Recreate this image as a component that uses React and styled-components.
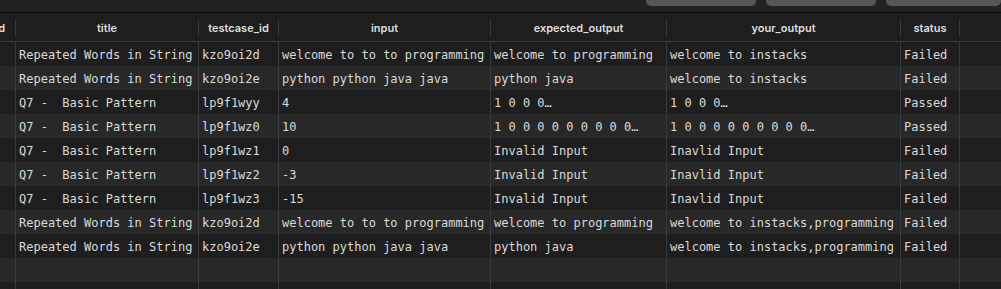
import React from "react";
import styled, { createGlobalStyle } from "styled-components";

const GlobalStyle = createGlobalStyle`
  html, body {
    margin: 0;
    padding: 0;
    background: #1e1e1e;
    overflow: hidden;
  }
  #root {
    width: 1001px;
    height: 289px;
    overflow: hidden;
  }
`;

const Page = styled.div`
  display: flex;
  flex-direction: column;
  width: 1001px;
  height: 289px;
  overflow: hidden;
  background: #1e1e1e;
`;

const Toolbar = styled.div`
  height: 12px;
  flex: none;
  background: #222222;
  border-bottom: 1px solid #0a0a0a;
  display: flex;
  justify-content: flex-end;
  align-items: flex-end;
  gap: 10px;
  overflow: hidden;
`;

const ToolButton = styled.div`
  width: ${(p) => p.$w}px;
  height: 22px;
  flex: none;
  margin-bottom: 6px;
  border-radius: 5px;
  background: #565656;
  color: #e6e6e6;
  font-family: Inter, "Liberation Sans", sans-serif;
  font-size: 12px;
  line-height: 12px;
  display: flex;
  align-items: flex-start;
  justify-content: ${(p) => p.$align || "center"};
  padding: 3px 14px 0;
  box-sizing: border-box;
`;

const Table = styled.div`
  display: flex;
  flex-direction: column;
  flex: 1;
`;

const HeaderRow = styled.div`
  display: flex;
  height: 29px;
  flex: none;
  box-sizing: border-box;
  padding: 7px 0 5px;
  border-bottom: 1px solid #3a3a3a;
  background: #1e1e1e;
`;

const HeaderCell = styled.div`
  width: ${(p) => (p.$w ? `${p.$w}px` : "auto")};
  flex: ${(p) => (p.$w ? "none" : "1")};
  box-sizing: border-box;
  border-right: ${(p) => (p.$w ? "1px solid #3a3a3a" : "none")};
  display: flex;
  align-items: center;
  justify-content: ${(p) => (p.$end ? "flex-end" : "center")};
  padding-right: ${(p) => (p.$end ? "10px" : "0")};
  overflow: hidden;
  white-space: nowrap;
  font-family: Inter, "Liberation Sans", sans-serif;
  font-size: 11px;
  font-weight: 600;
  color: #dedede;
`;

const Row = styled.div`
  display: flex;
  height: 24px;
  flex: none;
  background: ${(p) => (p.$alt ? "#282828" : "#1e1e1e")};
`;

const Cell = styled.div`
  width: ${(p) => (p.$w ? `${p.$w}px` : "auto")};
  flex: ${(p) => (p.$w ? "none" : "1")};
  box-sizing: border-box;
  border-right: ${(p) => (p.$w ? "1px solid #3a3a3a" : "none")};
  display: flex;
  align-items: center;
  padding-left: 3px;
  padding-top: 1px;
  overflow: hidden;
  white-space: pre;
  font-family: "DejaVu Sans Mono", "Liberation Mono", monospace;
  font-size: 12px;
  color: #dadada;
`;

const columns = [
  { key: "id", label: "id", w: 16 },
  { key: "title", label: "title", w: 183 },
  { key: "tc", label: "testcase_id", w: 80 },
  { key: "input", label: "input", w: 212 },
  { key: "exp", label: "expected_output", w: 176 },
  { key: "out", label: "your_output", w: 234 },
  { key: "status", label: "status", w: 59 },
  { key: "rest", label: "", w: 0 },
];

const data = [
  ["", "Repeated Words in String", "kzo9oi2d", "welcome to to to programming", "welcome to programming", "welcome to instacks", "Failed"],
  ["", "Repeated Words in String", "kzo9oi2e", "python python java java", "python java", "welcome to instacks", "Failed"],
  ["", "Q7 -  Basic Pattern", "lp9f1wyy", "4", "1 0 0 0…", "1 0 0 0…", "Passed"],
  ["", "Q7 -  Basic Pattern", "lp9f1wz0", "10", "1 0 0 0 0 0 0 0 0 0…", "1 0 0 0 0 0 0 0 0 0…", "Passed"],
  ["", "Q7 -  Basic Pattern", "lp9f1wz1", "0", "Invalid Input", "Inavlid Input", "Failed"],
  ["", "Q7 -  Basic Pattern", "lp9f1wz2", "-3", "Invalid Input", "Inavlid Input", "Failed"],
  ["", "Q7 -  Basic Pattern", "lp9f1wz3", "-15", "Invalid Input", "Inavlid Input", "Failed"],
  ["", "Repeated Words in String", "kzo9oi2d", "welcome to to to programming", "welcome to programming", "welcome to instacks,programming", "Failed"],
  ["", "Repeated Words in String", "kzo9oi2e", "python python java java", "python java", "welcome to instacks,programming", "Failed"],
  ["", "", "", "", "", "", ""],
  ["", "", "", "", "", "", ""],
];

export default function App() {
  return (
    <>
      <GlobalStyle />
      <Page>
        <Toolbar>
          <ToolButton $w={110} $align="flex-end">Run,</ToolButton>
          <ToolButton $w={110}>Style</ToolButton>
          <ToolButton $w={115}>Edit</ToolButton>
        </Toolbar>
        <Table>
          <HeaderRow>
            {columns.map((c, i) => (
              <HeaderCell key={c.key} $w={c.w || 0} $end={i === 0}>
                {c.label}
              </HeaderCell>
            ))}
          </HeaderRow>
          {data.map((r, ri) => (
            <Row key={ri} $alt={ri % 2 === 1}>
              {columns.map((c, ci) => (
                <Cell key={c.key} $w={c.w || 0}>
                  {ci < r.length ? r[ci] : ""}
                </Cell>
              ))}
            </Row>
          ))}
        </Table>
      </Page>
    </>
  );
}
